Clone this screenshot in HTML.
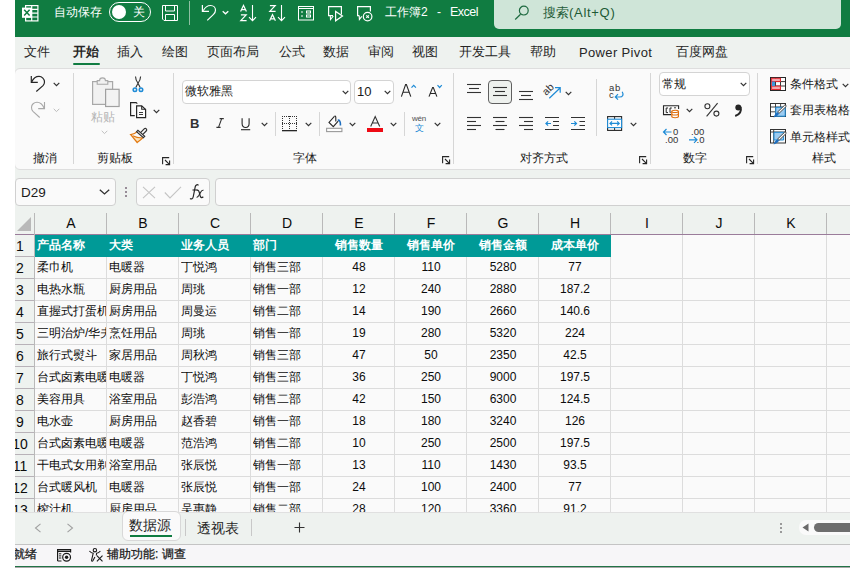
<!DOCTYPE html>
<html><head><meta charset="utf-8">
<style>
*{box-sizing:border-box;margin:0;padding:0}
html,body{width:850px;height:568px;overflow:hidden;background:#fff}
body{position:relative;font-family:"Liberation Sans",sans-serif;color:#262626}
.a{position:absolute}
.t{position:absolute;white-space:nowrap;line-height:1}
svg{position:absolute;overflow:visible}
#win{position:absolute;left:15px;top:0;width:835px;height:568px;background:#eef2ef;overflow:hidden}
#title{position:absolute;left:0;top:0;width:835px;height:37px;background:#107c41}
.wt{color:#fff}
#search{position:absolute;left:479px;top:-4px;width:347px;height:33px;background:#cfe5d8;border-radius:5px}
.menu{font-size:13px;color:#262626}
#ribbon{position:absolute;left:14px;top:68px;width:850px;height:102px;background:#fafafa;border:1px solid #dedede;border-radius:6px}
.sep{position:absolute;width:1px;background:#d6d6d6}
.gl{font-size:12px;color:#1a1a1a}
</style></head><body>
<div id="win">
  <div id="title">
    <!-- excel icon -->
    <svg style="left:7px;top:5px" width="17" height="17" viewBox="0 0 17 17">
      <rect x="3.6" y="0.6" width="12.3" height="15.3" fill="none" stroke="#fff" stroke-width="1.2"/>
      <path d="M9.7 0.6 V15.9 M3.6 4.4 H15.9 M3.6 8.2 H15.9 M3.6 12 H15.9" stroke="#fff" stroke-width="1.2"/>
      <rect x="0" y="2.6" width="10" height="10.2" fill="#fff"/>
      <path d="M2.2 4.8 L7.6 10.6 M7.6 4.8 L2.2 10.6" stroke="#107c41" stroke-width="1.5"/>
    </svg>
    <div class="t wt" style="left:39px;top:6px;font-size:12px">自动保存</div>
    <div class="a" style="left:94px;top:2px;width:42px;height:20px;border:1px solid #fff;border-radius:10px"></div>
    <div class="a" style="left:97px;top:5px;width:14px;height:14px;background:#fff;border-radius:50%"></div>
    <div class="t wt" style="left:118px;top:6px;font-size:12px">关</div>
    <svg style="left:147px;top:5px" width="16" height="16" viewBox="0 0 16 16">
      <path d="M0.5 0.5 H15.5 V15.5 H2 L0.5 14 Z" fill="none" stroke="#fff"/>
      <path d="M3.5 0.5 V6 H12.5 V0.5" fill="none" stroke="#fff"/>
      <path d="M3.5 15.5 V9.5 H12.5 V15.5" fill="none" stroke="#fff"/>
    </svg>
    <div class="a" style="left:174px;top:1px;width:1px;height:24px;background:#8fbfa2"></div>
    <!-- undo -->
    <svg style="left:186px;top:4px" width="16" height="18" viewBox="0 0 16 18">
      <path d="M1.4 1 V7.4 H8" fill="none" stroke="#fff" stroke-width="1.2"/>
      <path d="M2.2 6.8 C4 3.2 6.5 1.5 9.6 1.5 C12.6 1.5 14.5 3.8 14.5 6.2 C14.5 7.8 13.8 9 12.5 10.3 L6.3 16.4" fill="none" stroke="#fff" stroke-width="1.2"/>
    </svg>
    <svg style="left:207px;top:10px" width="7" height="5" viewBox="0 0 7 5"><path d="M0.7 1.2 L3.5 3.8 L6.3 1.2" fill="none" stroke="#fff" stroke-width="1.3"/></svg>
    <!-- sort az -->
    <svg style="left:225px;top:5px" width="18" height="17" viewBox="0 0 18 17"><path d="M0.6 6.6 L3.5 0.5 L6.4 6.6 M1.6 4.6 H5.4 M0.9 9.8 H6.2 L0.8 15.6 H6.6" fill="none" stroke="#fff" stroke-width="1.2"/><path d="M12.5 0 V15.6 M9 12.1 L12.5 15.6 L16 12.1" fill="none" stroke="#fff" stroke-width="1.1"/></svg>
    <svg style="left:254px;top:5px" width="18" height="17" viewBox="0 0 18 17"><path d="M0.9 0.6 H6.2 L0.8 6.4 H6.6 M0.6 15.8 L3.5 9.7 L6.4 15.8 M1.6 13.8 H5.4" fill="none" stroke="#fff" stroke-width="1.2"/><path d="M12.5 0 V15.6 M9 12.1 L12.5 15.6 L16 12.1" fill="none" stroke="#fff" stroke-width="1.1"/></svg>
    <!-- form -->
    <svg style="left:283px;top:6px" width="16" height="15" viewBox="0 0 16 15">
      <rect x="0.5" y="0.5" width="15" height="13.5" fill="none" stroke="#fff"/>
      <line x1="0.5" y1="2.5" x2="15.5" y2="2.5" stroke="#fff"/>
      <path d="M3 6 H5 M3 10 H5" stroke="#fff"/>
      <rect x="8.5" y="5" width="4" height="2" fill="none" stroke="#fff"/>
      <rect x="8.5" y="9" width="4" height="2" fill="none" stroke="#fff"/>
    </svg>
    <!-- slideshow -->
    <svg style="left:313px;top:6px" width="16" height="16" viewBox="0 0 16 16">
      <path d="M5 9.6 H0.6 V0.6 H13.4 V8.6" fill="none" stroke="#fff" stroke-width="1.2"/>
      <path d="M2.3 9.6 L2.5 13.5 L5.3 10" fill="none" stroke="#fff" stroke-width="1.1"/>
      <path d="M7.6 5.4 V14.8 L14.5 10.1 Z" fill="none" stroke="#fff" stroke-width="1.2"/>
    </svg>
    <!-- third -->
    <svg style="left:342px;top:6px" width="16" height="16" viewBox="0 0 16 16">
      <path d="M2.2 9.6 H0.6 V0.6 H13.4 V5.6" fill="none" stroke="#fff" stroke-width="1.2"/>
      <path d="M2.2 9.6 L2.4 13.5 L4.8 10.4" fill="none" stroke="#fff" stroke-width="1.1"/>
      <circle cx="10.6" cy="10.6" r="4.3" fill="#107c41" stroke="#fff" stroke-width="1.2"/>
      <path d="M9.3 9.3 L11.9 11.9 M11.9 9.3 L9.3 11.9" stroke="#fff" stroke-width="1.1"/>
    </svg>
    <div class="t wt" style="left:370px;top:6px;font-size:12px">工作簿2</div><div class="t wt" style="left:422px;top:6px;font-size:12px">-</div><div class="t wt" style="left:435px;top:6px;font-size:12.5px;letter-spacing:-0.5px">Excel</div>
  </div>
  <div id="search">
    <svg style="left:20px;top:10px" width="15" height="15" viewBox="0 0 15 15"><circle cx="9.8" cy="4.6" r="4.4" fill="none" stroke="#1e6a40" stroke-width="1.2"/><path d="M6.6 8.2 L1.2 13.5" stroke="#1e6a40" stroke-width="1.2"/></svg>
    <div class="t" style="left:49px;top:10px;font-size:13px;color:#1d5a36">搜索<span style="letter-spacing:0.7px">(Alt+Q)</span></div>
  </div>

  <div class="t menu" style="left:9px;top:45px">文件</div>
  <div class="t menu" style="left:58px;top:45px;font-weight:bold">开始</div>
  <div class="a" style="left:58px;top:63px;width:27px;height:2px;background:#107c41;border-radius:1px"></div>
  <div class="t menu" style="left:102px;top:45px">插入</div>
  <div class="t menu" style="left:147px;top:45px">绘图</div>
  <div class="t menu" style="left:192px;top:45px">页面布局</div>
  <div class="t menu" style="left:264px;top:45px">公式</div>
  <div class="t menu" style="left:308px;top:45px">数据</div>
  <div class="t menu" style="left:353px;top:45px">审阅</div>
  <div class="t menu" style="left:397px;top:45px">视图</div>
  <div class="t menu" style="left:444px;top:45px">开发工具</div>
  <div class="t menu" style="left:515px;top:45px">帮助</div>
  <div class="t menu" style="left:564px;top:46px;letter-spacing:0.35px">Power Pivot</div>
  <div class="t menu" style="left:661px;top:45px">百度网盘</div>
<div id="pg" class="a" style="left:-15px;top:0;width:850px;height:568px">
  <div id="ribbon"></div>
  <!-- undo group -->
  <svg style="left:30px;top:75px" width="16" height="18" viewBox="0 0 16 18">
    <path d="M1.3 1 V7.4 H7.8" fill="none" stroke="#262626" stroke-width="1.2"/>
    <path d="M1.7 7 C3.5 3 6 1.4 9 1.4 C12 1.4 14.5 4 14.5 7 C14.5 8.5 14 9.5 13 10.7 L6.3 16.5" fill="none" stroke="#262626" stroke-width="1.2"/>
  </svg>
  <svg style="left:53px;top:82px" width="7" height="5" viewBox="0 0 7 5"><path d="M0.7 0.8 L3.5 3.6 L6.3 0.8" fill="none" stroke="#323232" stroke-width="1.2"/></svg>
  <svg style="left:30px;top:97px" width="16" height="22" viewBox="0 0 16 22">
    <path d="M14.5 5 V11.6 H8.2" fill="none" stroke="#a8a8a8" stroke-width="1.1"/>
    <path d="M14.2 11.3 C12.5 7.3 10 5.3 7 5.3 C4 5.3 1.5 7.5 1.5 10.5 C1.5 12 2 13.3 3 14.3 L9.7 20.5" fill="none" stroke="#a8a8a8" stroke-width="1.1"/>
  </svg>
  <svg style="left:53px;top:108px" width="7" height="5" viewBox="0 0 7 5"><path d="M0.7 0.8 L3.5 3.6 L6.3 0.8" fill="none" stroke="#bcbcbc" stroke-width="1"/></svg>
  <div class="t gl" style="left:33px;top:151.6px">撤消</div>
  <div class="sep" style="left:73px;top:73px;height:91px"></div>
  <!-- clipboard -->
  <svg style="left:91px;top:76px" width="30" height="32" viewBox="0 0 30 32">
    <rect x="1.6" y="5.6" width="20" height="22.8" fill="#f1f1f1" stroke="#a8a8a8" stroke-width="1.2"/>
    <path d="M6.2 4.6 H8.6 C8.6 1 14.4 1 14.4 4.6 H16.8 V8.2 H6.2 Z" fill="#f1f1f1" stroke="#a8a8a8" stroke-width="1.1"/>
    <rect x="14.6" y="13.3" width="13.5" height="17.2" fill="#f3f3f3" stroke="#a0a0a0" stroke-width="1.2"/>
  </svg>
  <div class="t gl" style="left:91px;top:111px;color:#b4b4b4">粘贴</div>
  <svg style="left:101px;top:130px" width="7" height="5" viewBox="0 0 7 5"><path d="M0.7 0.8 L3.5 3.6 L6.3 0.8" fill="none" stroke="#c0c0c0" stroke-width="1"/></svg>
  <svg style="left:132px;top:76px" width="12" height="16" viewBox="0 0 12 16">
    <path d="M3.5 0.5 C3.5 3 4.5 5 6 7.2 L8.2 11.6 M8.6 0.5 C8.6 3 7.6 5 6 7.2 L3.8 11.6" fill="none" stroke="#323232" stroke-width="1.1"/>
    <circle cx="2.9" cy="13.8" r="1.75" fill="#e8f0f8" stroke="#1e8bd6" stroke-width="1.5"/>
    <circle cx="9" cy="13.8" r="1.75" fill="#e8f0f8" stroke="#1e8bd6" stroke-width="1.5"/>
  </svg>
  <svg style="left:130px;top:102px" width="17" height="17" viewBox="0 0 17 17">
    <path d="M4.8 13.6 H0.6 V0.6 H6.2 L7.3 1.6" fill="none" stroke="#262626" stroke-width="1.2"/>
    <path d="M6.6 15.6 V3.9 H11.7 L15.6 7.6 V15.6 Z" fill="#fdfdfd" stroke="#262626" stroke-width="1.2"/>
    <path d="M11.7 3.9 V7.3 H15.6" fill="none" stroke="#262626" stroke-width="1.1"/>
    <path d="M9 10.5 H13 M9 12.5 H13" stroke="#262626" stroke-width="0.9"/>
  </svg>
  <svg style="left:153px;top:109px" width="7" height="5" viewBox="0 0 7 5"><path d="M0.7 0.8 L3.5 3.6 L6.3 0.8" fill="none" stroke="#323232" stroke-width="1.2"/></svg>
  <svg style="left:130px;top:124px" width="18" height="20" viewBox="0 0 18 20">
    <path d="M3.5 12.6 C6.5 14 9.5 14.6 12.4 14.2 L7.3 18.4 Z" fill="#fde3b8"/>
    <path d="M7.4 7.4 C5.5 9.4 3 10.4 0.7 10.6 L7.2 18.5 C9 17.1 11 15.6 13 13.6" fill="none" stroke="#e27a12" stroke-width="1.3"/>
    <path d="M2.6 11.8 C5.5 13.4 8.5 14 12.2 14" fill="none" stroke="#e27a12" stroke-width="1.1"/>
    <path d="M10.8 8.4 L14.2 4.9 C14.8 4.3 15.8 4.3 16.3 4.9 C16.8 5.4 16.8 6.4 16.2 7 L12.8 10.4" fill="#fdfdfd" stroke="#323232" stroke-width="1.2"/>
    <path d="M6.6 7.7 L7.9 6.4 L14.7 12.3 L13.4 13.6 Z" fill="#fdfdfd" stroke="#323232" stroke-width="1.15"/>
  </svg>
  <div class="t gl" style="left:97px;top:151.6px">剪贴板</div>
  <svg style="left:162px;top:157px" width="9" height="9" viewBox="0 0 9 9"><path d="M0.6 7.2 V0.6 H7.2" fill="none" stroke="#262626" stroke-width="1.1"/><path d="M3 3 L7.6 7.6 M3.6 7.6 H7.6 V3.6" fill="none" stroke="#262626" stroke-width="1.1"/></svg>
  <div class="sep" style="left:173px;top:73px;height:91px"></div>

  <!-- font group -->
  <div class="a" style="left:182px;top:80px;width:169px;height:24px;background:#fff;border:1px solid #d4d4d4;border-radius:4px"></div>
  <div class="t gl" style="left:185px;top:85px">微软雅黑</div>
  <svg style="left:342px;top:90px" width="7" height="5" viewBox="0 0 7 5"><path d="M0.7 0.8 L3.5 3.6 L6.3 0.8" fill="none" stroke="#323232" stroke-width="1.2"/></svg>
  <div class="a" style="left:354px;top:80px;width:40px;height:24px;background:#fff;border:1px solid #d4d4d4;border-radius:4px"></div>
  <div class="t gl" style="left:357px;top:85px;font-size:13px">10</div>
  <svg style="left:384px;top:90px" width="7" height="5" viewBox="0 0 7 5"><path d="M0.7 0.8 L3.5 3.6 L6.3 0.8" fill="none" stroke="#323232" stroke-width="1.2"/></svg>
  <svg style="left:400px;top:84px" width="12" height="13" viewBox="0 0 12 13"><path d="M1.4 12.6 L5.6 0.6 H6.4 L10.8 12.6 M3 8.3 H9.2" fill="none" stroke="#262626" stroke-width="1.1"/></svg>
  <svg style="left:411px;top:84px" width="6" height="5" viewBox="0 0 6 5"><path d="M0.5 3.6 L2.7 1.3 L4.9 3.6" fill="none" stroke="#1e8bd6" stroke-width="1.2"/></svg>
  <svg style="left:428px;top:87px" width="10" height="10" viewBox="0 0 10 10"><path d="M1 9.6 L4.6 0.6 H5.3 L8.9 9.6 M2.3 6.5 H7.6" fill="none" stroke="#262626" stroke-width="1.1"/></svg>
  <svg style="left:437px;top:84px" width="6" height="5" viewBox="0 0 6 5"><path d="M0.5 1.2 L2.6 3.5 L4.8 1.2" fill="none" stroke="#1e8bd6" stroke-width="1.2"/></svg>
  <div class="t" style="left:190px;top:117px;font-size:13px;font-weight:bold;color:#323232">B</div>
  <svg style="left:216px;top:118px" width="9" height="10" viewBox="0 0 9 10"><path d="M3.6 0.6 H7.8 M0.4 9.4 H4.6 M5.7 0.6 L2.5 9.4" fill="none" stroke="#323232" stroke-width="1.1"/></svg>
  <svg style="left:241px;top:118px" width="10" height="13" viewBox="0 0 10 13"><path d="M1.1 0.3 V5.6 C1.1 8.2 2.6 9.5 4.6 9.5 C6.6 9.5 8.1 8.2 8.1 5.6 V0.3" fill="none" stroke="#262626" stroke-width="1.1"/><path d="M0 11.7 H9.2" stroke="#262626" stroke-width="1.1"/></svg>
  <svg style="left:261px;top:122px" width="7" height="5" viewBox="0 0 7 5"><path d="M0.7 0.8 L3.5 3.6 L6.3 0.8" fill="none" stroke="#323232" stroke-width="1.2"/></svg>
  <div class="sep" style="left:275px;top:112px;height:24px"></div>
  <svg style="left:282px;top:116px" width="16" height="16" viewBox="0 0 16 16"><g fill="#323232"><rect x="0" y="0" width="1" height="1"/><rect x="0" y="2" width="1" height="1"/><rect x="0" y="4" width="1" height="1"/><rect x="0" y="6" width="1" height="1"/><rect x="0" y="8" width="1" height="1"/><rect x="0" y="10" width="1" height="1"/><rect x="0" y="12" width="1" height="1"/><rect x="7" y="0" width="1" height="1"/><rect x="7" y="2" width="1" height="1"/><rect x="7" y="4" width="1" height="1"/><rect x="7" y="6" width="1" height="1"/><rect x="7" y="8" width="1" height="1"/><rect x="7" y="10" width="1" height="1"/><rect x="7" y="12" width="1" height="1"/><rect x="14" y="0" width="1" height="1"/><rect x="14" y="2" width="1" height="1"/><rect x="14" y="4" width="1" height="1"/><rect x="14" y="6" width="1" height="1"/><rect x="14" y="8" width="1" height="1"/><rect x="14" y="10" width="1" height="1"/><rect x="14" y="12" width="1" height="1"/><rect x="0" y="0" width="1" height="1"/><rect x="2" y="0" width="1" height="1"/><rect x="4" y="0" width="1" height="1"/><rect x="6" y="0" width="1" height="1"/><rect x="8" y="0" width="1" height="1"/><rect x="10" y="0" width="1" height="1"/><rect x="12" y="0" width="1" height="1"/><rect x="14" y="0" width="1" height="1"/><rect x="0" y="7" width="1" height="1"/><rect x="2" y="7" width="1" height="1"/><rect x="4" y="7" width="1" height="1"/><rect x="6" y="7" width="1" height="1"/><rect x="8" y="7" width="1" height="1"/><rect x="10" y="7" width="1" height="1"/><rect x="12" y="7" width="1" height="1"/><rect x="14" y="7" width="1" height="1"/></g><rect x="0" y="14" width="15" height="1.3" fill="#262626"/></svg>
  <svg style="left:305px;top:122px" width="7" height="5" viewBox="0 0 7 5"><path d="M0.7 0.8 L3.5 3.6 L6.3 0.8" fill="none" stroke="#323232" stroke-width="1.2"/></svg>
  <div class="sep" style="left:319px;top:112px;height:24px"></div>
  <svg style="left:326px;top:115px" width="17" height="18" viewBox="0 0 17 18">
    <path d="M8.4 1.4 L3 7.4 L7.3 11.7 L12.2 6.2" fill="#fdfdfd" stroke="#262626" stroke-width="1.1"/>
    <path d="M8.4 1.4 C9.2 0.7 9.8 1.4 9.8 2.4 V6.4" fill="none" stroke="#262626" stroke-width="1.1"/>
    <path d="M11.8 5.2 C13.6 4.9 14.4 6.6 14.4 8.8 V10.6" fill="none" stroke="#1e6fc0" stroke-width="1.6"/>
    <rect x="0.6" y="13.3" width="15.3" height="3.3" fill="#fdfdfd" stroke="#9a9a9a" stroke-width="1.1"/>
  </svg>
  <svg style="left:349px;top:122px" width="7" height="5" viewBox="0 0 7 5"><path d="M0.7 0.8 L3.5 3.6 L6.3 0.8" fill="none" stroke="#323232" stroke-width="1.2"/></svg>
  <svg style="left:370px;top:116px" width="11" height="11" viewBox="0 0 11 11"><path d="M0.7 10.6 L5.2 0.6 L9.7 10.6 M2.3 7 H8.1" fill="none" stroke="#323232" stroke-width="1.1"/></svg>
  <div class="a" style="left:367px;top:128px;width:16px;height:4px;background:#ee0a14"></div>
  <svg style="left:390px;top:122px" width="7" height="5" viewBox="0 0 7 5"><path d="M0.7 0.8 L3.5 3.6 L6.3 0.8" fill="none" stroke="#323232" stroke-width="1.2"/></svg>
  <div class="sep" style="left:404px;top:112px;height:24px"></div>
  <div class="t" style="left:412px;top:115px;font-size:8px;color:#505050;letter-spacing:-0.3px">wén</div>
  <div class="t" style="left:414.5px;top:123.5px;font-size:9px;color:#1e8bd6">文</div>
  <svg style="left:434px;top:122px" width="7" height="5" viewBox="0 0 7 5"><path d="M0.7 0.8 L3.5 3.6 L6.3 0.8" fill="none" stroke="#323232" stroke-width="1.2"/></svg>
  <div class="t gl" style="left:293px;top:151.6px">字体</div>
  <svg style="left:442px;top:156px" width="9" height="9" viewBox="0 0 9 9"><path d="M0.6 7.2 V0.6 H7.2" fill="none" stroke="#262626" stroke-width="1.1"/><path d="M3 3 L7.6 7.6 M3.6 7.6 H7.6 V3.6" fill="none" stroke="#262626" stroke-width="1.1"/></svg>
  <div class="sep" style="left:453px;top:73px;height:91px"></div>

  <!-- alignment group -->
  <svg style="left:467px;top:84px" width="20" height="20" viewBox="0 0 20 20"><path d="M0 0.5 H14" stroke="#323232" stroke-width="1.1"/><path d="M2 4.5 H12" stroke="#323232" stroke-width="1.1"/><path d="M0 8.5 H14" stroke="#323232" stroke-width="1.1"/></svg>
  <div class="a" style="left:488px;top:80px;width:24px;height:24px;background:#eef1ee;border:1px solid #5f5f5f;border-radius:4px"></div>
  <svg style="left:493px;top:87px" width="20" height="20" viewBox="0 0 20 20"><path d="M0 0.5 H14" stroke="#323232" stroke-width="1.1"/><path d="M2 4.5 H12" stroke="#323232" stroke-width="1.1"/><path d="M0 8.5 H14" stroke="#323232" stroke-width="1.1"/></svg>
  <svg style="left:519px;top:91px" width="20" height="20" viewBox="0 0 20 20"><path d="M0 0.5 H14" stroke="#323232" stroke-width="1.1"/><path d="M2 4.5 H12" stroke="#323232" stroke-width="1.1"/><path d="M0 8.5 H14" stroke="#323232" stroke-width="1.1"/></svg>
  <svg style="left:543px;top:83px" width="19" height="17" viewBox="0 0 19 17">
    <text x="0" y="0" font-size="10.5" fill="#323232" font-family="Liberation Sans" transform="translate(3.3,13) rotate(-45)">ab</text>
    <path d="M6.3 15.2 L16.8 5.2 M12 4.6 H17.2 V9.8" fill="none" stroke="#1e8bd6" stroke-width="1.2"/>
  </svg>
  <svg style="left:565px;top:91px" width="7" height="5" viewBox="0 0 7 5"><path d="M0.7 0.8 L3.5 3.6 L6.3 0.8" fill="none" stroke="#323232" stroke-width="1.2"/></svg>
  <svg style="left:467px;top:117px" width="20" height="20" viewBox="0 0 20 20"><path d="M0 0.5 H14" stroke="#323232" stroke-width="1.1"/><path d="M0 4.5 H9" stroke="#323232" stroke-width="1.1"/><path d="M0 8.5 H14" stroke="#323232" stroke-width="1.1"/><path d="M0 12.5 H9" stroke="#323232" stroke-width="1.1"/></svg>
  <svg style="left:493px;top:117px" width="20" height="20" viewBox="0 0 20 20"><path d="M0 0.5 H14" stroke="#323232" stroke-width="1.1"/><path d="M2.5 4.5 H11.5" stroke="#323232" stroke-width="1.1"/><path d="M0 8.5 H14" stroke="#323232" stroke-width="1.1"/><path d="M2.5 12.5 H11.5" stroke="#323232" stroke-width="1.1"/></svg>
  <svg style="left:519px;top:117px" width="20" height="20" viewBox="0 0 20 20"><path d="M0 0.5 H14" stroke="#323232" stroke-width="1.1"/><path d="M5 4.5 H14" stroke="#323232" stroke-width="1.1"/><path d="M0 8.5 H14" stroke="#323232" stroke-width="1.1"/><path d="M5 12.5 H14" stroke="#323232" stroke-width="1.1"/></svg>
  <svg style="left:545px;top:117px" width="20" height="20" viewBox="0 0 20 20"><path d="M0 0.5 H14 M8 4.5 H14 M8 8.5 H14 M0 12.5 H14" stroke="#323232" stroke-width="1.1"/></svg>
  <svg style="left:545px;top:117px" width="8" height="12" viewBox="0 0 8 12"><path d="M6 6.5 H0.9 M3.1 4.3 L0.9 6.5 L3.1 8.7" fill="none" stroke="#1e8bd6" stroke-width="1.2"/></svg>
  <svg style="left:571px;top:117px" width="20" height="20" viewBox="0 0 20 20"><path d="M0 0.5 H14 M8.5 4.5 H14 M8.5 8.5 H14 M0 12.5 H14" stroke="#323232" stroke-width="1.1"/></svg>
  <svg style="left:571px;top:117px" width="8" height="12" viewBox="0 0 8 12"><path d="M0 6.5 H5.5 M3.3 4.3 L5.5 6.5 L3.3 8.7" fill="none" stroke="#1e8bd6" stroke-width="1.2"/></svg>
  <div class="sep" style="left:596px;top:79px;height:57px"></div>
  <div class="t" style="left:609px;top:84px;font-size:9.5px;color:#323232;line-height:7.3px;letter-spacing:0.6px">ab<br>c</div>
  <svg style="left:614px;top:91px" width="10" height="9" viewBox="0 0 10 9"><path d="M8.2 0.8 C9.8 3.5 9 6 5.5 6 H1.5 M4 3.2 L1.3 6 L4 8.6" fill="none" stroke="#1e8bd6" stroke-width="1.2"/></svg>
  <svg style="left:607px;top:116px" width="16" height="16" viewBox="0 0 16 16">
    <rect x="0.6" y="0.6" width="14" height="13.8" fill="#fdfdfd" stroke="#262626" stroke-width="1.1"/>
    <path d="M7.6 0.6 V3 M7.6 11.6 V14.4" stroke="#262626" stroke-width="1"/>
    <rect x="0.6" y="3.2" width="14" height="8.4" fill="#fdfdfd" stroke="#1e8bd6" stroke-width="1.1"/>
    <path d="M3 7.4 H12.2 M5 5.4 L3 7.4 L5 9.4 M10.2 5.4 L12.2 7.4 L10.2 9.4" fill="none" stroke="#1e8bd6" stroke-width="1.2"/>
  </svg>
  <svg style="left:630px;top:122px" width="7" height="5" viewBox="0 0 7 5"><path d="M0.7 0.8 L3.5 3.6 L6.3 0.8" fill="none" stroke="#323232" stroke-width="1.2"/></svg>
  <div class="t gl" style="left:520px;top:151.6px">对齐方式</div>
  <svg style="left:639px;top:156px" width="9" height="9" viewBox="0 0 9 9"><path d="M0.6 7.2 V0.6 H7.2" fill="none" stroke="#262626" stroke-width="1.1"/><path d="M3 3 L7.6 7.6 M3.6 7.6 H7.6 V3.6" fill="none" stroke="#262626" stroke-width="1.1"/></svg>
  <div class="sep" style="left:650px;top:73px;height:91px"></div>
  <!-- number group -->
  <div class="a" style="left:659px;top:72px;width:91px;height:24px;background:#fff;border:1px solid #d4d4d4;border-radius:4px"></div>
  <div class="t gl" style="left:662px;top:78px">常规</div>
  <svg style="left:740px;top:82px" width="7" height="5" viewBox="0 0 7 5"><path d="M0.7 0.8 L3.5 3.6 L6.3 0.8" fill="none" stroke="#323232" stroke-width="1.2"/></svg>
  <svg style="left:662px;top:104px" width="19" height="15" viewBox="0 0 19 15">
    <path d="M9 10.6 H1.5 V1.7 H16.6 V5" fill="none" stroke="#262626" stroke-width="1.1"/>
    <path d="M6 4 H4.2 V8.6 H6 M9.8 4 H8 V8.6 H8.5" fill="none" stroke="#262626" stroke-width="1"/>
    <path d="M12 3.8 H14" stroke="#262626" stroke-width="0.9"/>
    <path d="M9.8 7.3 C9.8 5.9 16.4 5.9 16.4 7.3 V12.6 C16.4 14.1 9.8 14.1 9.8 12.6 Z" fill="#fdfdfd" stroke="#e07010" stroke-width="1.2"/>
    <path d="M9.8 7.4 C9.8 8.8 16.4 8.8 16.4 7.4 M9.8 10 C9.8 11.4 16.4 11.4 16.4 10" fill="none" stroke="#e07010" stroke-width="1.1"/>
  </svg>
  <svg style="left:686px;top:108px" width="7" height="5" viewBox="0 0 7 5"><path d="M0.7 0.8 L3.5 3.6 L6.3 0.8" fill="none" stroke="#323232" stroke-width="1.2"/></svg>
  <svg style="left:704px;top:102px" width="16" height="16" viewBox="0 0 16 16"><circle cx="3.4" cy="4.2" r="2.5" fill="none" stroke="#323232" stroke-width="1.1"/><circle cx="12.4" cy="11.6" r="2.5" fill="none" stroke="#323232" stroke-width="1.1"/><path d="M13.6 1.2 L2.6 14.4" stroke="#323232" stroke-width="1.1"/></svg>
  <svg style="left:734px;top:104px" width="9" height="13" viewBox="0 0 9 13"><circle cx="4.3" cy="3.4" r="3" fill="#262626"/><path d="M6.6 3 C7.6 7 5.5 10.5 1.2 12" fill="none" stroke="#262626" stroke-width="2"/></svg>
  <svg style="left:662px;top:127px" width="18" height="17" viewBox="0 0 18 17">
    <path d="M9.5 5 H1.5 M4.5 2 L1.5 5 L4.5 8" fill="none" stroke="#1e8bd6" stroke-width="1.2"/>
    <text x="11" y="7.8" font-size="9.5" fill="#323232" font-family="Liberation Sans">0</text>
    <text x="3" y="15.6" font-size="9.5" fill="#323232" font-family="Liberation Sans">.00</text>
  </svg>
  <svg style="left:688px;top:127px" width="18" height="17" viewBox="0 0 18 17">
    <text x="3" y="7.8" font-size="9.5" fill="#323232" font-family="Liberation Sans">.00</text>
    <path d="M1 12.8 H9 M6 9.8 L9 12.8 L6 15.8" fill="none" stroke="#1e8bd6" stroke-width="1.2"/>
    <text x="8.5" y="15.6" font-size="9.5" fill="#323232" font-family="Liberation Sans">.0</text>
  </svg>
  <div class="t gl" style="left:683px;top:151.6px">数字</div>
  <svg style="left:746px;top:156px" width="9" height="9" viewBox="0 0 9 9"><path d="M0.6 7.2 V0.6 H7.2" fill="none" stroke="#262626" stroke-width="1.1"/><path d="M3 3 L7.6 7.6 M3.6 7.6 H7.6 V3.6" fill="none" stroke="#262626" stroke-width="1.1"/></svg>
  <div class="sep" style="left:757px;top:73px;height:91px"></div>
  <!-- styles group -->
  <svg style="left:770px;top:77px" width="16" height="14" viewBox="0 0 16 14">
    <rect x="0.5" y="0.5" width="15" height="13" fill="#fdfdfd" stroke="#262626" stroke-width="1"/>
    <path d="M5.5 0.5 V13.5 M10.5 0.5 V13.5 M0.5 4.6 H15.5 M0.5 9 H15.5" stroke="#262626" stroke-width="0.9"/>
    <rect x="1.6" y="1.3" width="8.8" height="3.2" fill="#f3a7ad" stroke="#e3262f" stroke-width="1"/>
    <rect x="1.6" y="9.1" width="8.8" height="3.4" fill="#f3a7ad" stroke="#e3262f" stroke-width="1"/>
    <rect x="1.6" y="4.5" width="3.4" height="4.6" fill="#3d95dd"/>
    <path d="M1.4 4.5 V9.1" stroke="#e3262f" stroke-width="0.9"/>
  </svg>
  <div class="t gl" style="left:790px;top:78px">条件格式</div>
  <svg style="left:842px;top:83px" width="7" height="5" viewBox="0 0 7 5"><path d="M0.7 0.8 L3.5 3.6 L6.3 0.8" fill="none" stroke="#323232" stroke-width="1.2"/></svg>
  <svg style="left:770px;top:103px" width="17" height="15" viewBox="0 0 17 15">
    <rect x="0.5" y="0.5" width="15" height="13" fill="#fdfdfd" stroke="#323232" stroke-width="1"/>
    <path d="M0.5 4 H15.5 M0.5 8.8 H5.5 M5.5 0.5 V13.5 M10.6 0.5 V4" stroke="#323232" stroke-width="0.9"/>
    <path d="M5.8 4.3 H15.2 V13.2 H5.8 Z" fill="#9ccbf0" stroke="#1e8bd6" stroke-width="1"/>
    <path d="M16.2 3.4 L9 10.4 L7.6 9 L14.8 2 C15.3 1.6 16.6 2.9 16.2 3.4 Z" fill="#fdfdfd" stroke="#323232" stroke-width="0.9"/>
    <path d="M7.6 9.2 L9 10.6 C8 12.6 6.2 14 3.6 14.4 C4.3 12 5.6 10 7.6 9.2 Z" fill="#1e6fc0"/>
  </svg>
  <div class="t gl" style="left:790px;top:104px">套用表格格式</div>
  <svg style="left:770px;top:129px" width="17" height="15" viewBox="0 0 17 15">
    <rect x="0.5" y="0.5" width="15" height="13.5" fill="#fdfdfd" stroke="#323232" stroke-width="1"/>
    <path d="M0.5 3 H15.5 M3.7 0.5 V14" stroke="#323232" stroke-width="0.9"/>
    <path d="M4 3.3 H13.6 V11 H4 Z" fill="#9ccbf0" stroke="#1e8bd6" stroke-width="1"/>
    <path d="M16.2 4.4 L9 11.4 L7.6 10 L14.8 3 C15.3 2.6 16.6 3.9 16.2 4.4 Z" fill="#fdfdfd" stroke="#323232" stroke-width="0.9"/>
    <path d="M7.6 10.2 L9 11.6 C8 13.6 6.2 15 3.6 15.4 C4.3 13 5.6 11 7.6 10.2 Z" fill="#1e6fc0"/>
  </svg>
  <div class="t gl" style="left:790px;top:131px">单元格样式</div>
  <div class="t gl" style="left:812px;top:151.6px">样式</div>
  <!--GRID_START-->
  <!-- formula bar -->
  <div class="a" style="left:15px;top:178px;width:101px;height:28px;background:#fafafa;border:1px solid #d0d0d0;border-radius:4px"></div>
  <div class="t" style="left:21px;top:186px;font-size:13.5px;color:#1a1a1a">D29</div>
  <svg style="left:99px;top:189px" width="11" height="6" viewBox="0 0 11 6"><path d="M0.8 0.8 L5.5 5 L10.2 0.8" fill="none" stroke="#323232" stroke-width="1.3"/></svg>
  <div class="a" style="left:125px;top:187px;width:2px;height:2px;background:#7a6a7a;border-radius:1px"></div>
  <div class="a" style="left:125px;top:191px;width:2px;height:2px;background:#7a6a7a;border-radius:1px"></div>
  <div class="a" style="left:125px;top:195px;width:2px;height:2px;background:#7a6a7a;border-radius:1px"></div>
  <div class="a" style="left:136px;top:178px;width:74px;height:28px;background:#fafafa;border:1px solid #d0d0d0;border-radius:4px"></div>
  <svg style="left:142px;top:186px" width="14" height="13" viewBox="0 0 14 13"><path d="M1 0.8 L13 12.2 M13 0.8 L1 12.2" stroke="#c4c4c4" stroke-width="1.1"/></svg>
  <svg style="left:164px;top:186px" width="18" height="13" viewBox="0 0 18 13"><path d="M0.8 6.5 L6 12 L17 0.8" fill="none" stroke="#c4c4c4" stroke-width="1.1"/></svg>
  <svg style="left:189px;top:184px" width="16" height="16" viewBox="0 0 16 16"><path d="M9.5 1.3 C8.5 0.3 6.8 0.6 6.3 2.5 L4.3 12.5 C3.8 14.8 2.5 15.5 1 14.5" fill="none" stroke="#262626" stroke-width="1.2"/><path d="M3.5 6 H8.3" stroke="#262626" stroke-width="1.1"/><path d="M7.8 6.4 C9.3 5.8 9.8 6.8 10.3 8.5 L11.3 12.3 C11.8 13.8 13 14 14.3 12.8" fill="none" stroke="#262626" stroke-width="1.2"/><path d="M14.5 6.3 C13.3 6 12.5 6.8 11.8 8 L9.8 11.5 C9 12.8 8.5 13.5 7.6 13.2" fill="none" stroke="#262626" stroke-width="1.1"/></svg>
  <div class="a" style="left:215px;top:178px;width:650px;height:28px;background:#fafafa;border:1px solid #d0d0d0;border-radius:4px"></div>
  <!-- grid -->
  <div class="a" style="left:6px;top:213px;width:860px;height:300px;background:#fafafa"></div>
  <div class="a" style="left:6px;top:213px;width:860px;height:21px;background:#eef2ef"></div>
  <div class="a" style="left:6px;top:234px;width:28px;height:280px;background:#eef2ef"></div>
  <svg style="left:17px;top:217px" width="14" height="14" viewBox="0 0 14 14"><path d="M14 0 V14 H0 Z" fill="#b9b9b9"/></svg>
  <div class="a" style="left:34px;top:213px;width:1px;height:21px;background:#b9b9b9"></div>
  <div class="t" style="left:35px;top:215px;width:72px;text-align:center;font-size:14px;color:#0c0c0c;line-height:16px">A</div>
  <div class="a" style="left:106px;top:213px;width:1px;height:21px;background:#b9b9b9"></div>
  <div class="t" style="left:107px;top:215px;width:72px;text-align:center;font-size:14px;color:#0c0c0c;line-height:16px">B</div>
  <div class="a" style="left:178px;top:213px;width:1px;height:21px;background:#b9b9b9"></div>
  <div class="t" style="left:179px;top:215px;width:72px;text-align:center;font-size:14px;color:#0c0c0c;line-height:16px">C</div>
  <div class="a" style="left:250px;top:213px;width:1px;height:21px;background:#b9b9b9"></div>
  <div class="t" style="left:251px;top:215px;width:72px;text-align:center;font-size:14px;color:#0c0c0c;line-height:16px">D</div>
  <div class="a" style="left:322px;top:213px;width:1px;height:21px;background:#b9b9b9"></div>
  <div class="t" style="left:323px;top:215px;width:72px;text-align:center;font-size:14px;color:#0c0c0c;line-height:16px">E</div>
  <div class="a" style="left:394px;top:213px;width:1px;height:21px;background:#b9b9b9"></div>
  <div class="t" style="left:395px;top:215px;width:72px;text-align:center;font-size:14px;color:#0c0c0c;line-height:16px">F</div>
  <div class="a" style="left:466px;top:213px;width:1px;height:21px;background:#b9b9b9"></div>
  <div class="t" style="left:467px;top:215px;width:72px;text-align:center;font-size:14px;color:#0c0c0c;line-height:16px">G</div>
  <div class="a" style="left:538px;top:213px;width:1px;height:21px;background:#b9b9b9"></div>
  <div class="t" style="left:539px;top:215px;width:72px;text-align:center;font-size:14px;color:#0c0c0c;line-height:16px">H</div>
  <div class="a" style="left:610px;top:213px;width:1px;height:21px;background:#b9b9b9"></div>
  <div class="t" style="left:611px;top:215px;width:72px;text-align:center;font-size:14px;color:#0c0c0c;line-height:16px">I</div>
  <div class="a" style="left:682px;top:213px;width:1px;height:21px;background:#b9b9b9"></div>
  <div class="t" style="left:683px;top:215px;width:72px;text-align:center;font-size:14px;color:#0c0c0c;line-height:16px">J</div>
  <div class="a" style="left:754px;top:213px;width:1px;height:21px;background:#b9b9b9"></div>
  <div class="t" style="left:755px;top:215px;width:72px;text-align:center;font-size:14px;color:#0c0c0c;line-height:16px">K</div>
  <div class="a" style="left:826px;top:213px;width:1px;height:21px;background:#b9b9b9"></div>
  <div class="t" style="left:827px;top:215px;width:72px;text-align:center;font-size:14px;color:#0c0c0c;line-height:16px">L</div>
  <div class="a" style="left:6px;top:234px;width:860px;height:1px;background:#9a7c9a"></div>
  <div class="a" style="left:34px;top:213px;width:1px;height:300px;background:#b9b9b9"></div>
  <div class="a" style="left:6px;top:256px;width:28px;height:1px;background:#b8b2b8"></div>
  <div class="t" style="left:6px;top:238px;width:28px;text-align:center;font-size:14px;color:#0c0c0c;line-height:16px">1</div>
  <div class="a" style="left:6px;top:278px;width:28px;height:1px;background:#b8b2b8"></div>
  <div class="t" style="left:6px;top:260px;width:28px;text-align:center;font-size:14px;color:#0c0c0c;line-height:16px">2</div>
  <div class="a" style="left:6px;top:300px;width:28px;height:1px;background:#b8b2b8"></div>
  <div class="t" style="left:6px;top:282px;width:28px;text-align:center;font-size:14px;color:#0c0c0c;line-height:16px">3</div>
  <div class="a" style="left:6px;top:322px;width:28px;height:1px;background:#b8b2b8"></div>
  <div class="t" style="left:6px;top:304px;width:28px;text-align:center;font-size:14px;color:#0c0c0c;line-height:16px">4</div>
  <div class="a" style="left:6px;top:344px;width:28px;height:1px;background:#b8b2b8"></div>
  <div class="t" style="left:6px;top:326px;width:28px;text-align:center;font-size:14px;color:#0c0c0c;line-height:16px">5</div>
  <div class="a" style="left:6px;top:366px;width:28px;height:1px;background:#b8b2b8"></div>
  <div class="t" style="left:6px;top:348px;width:28px;text-align:center;font-size:14px;color:#0c0c0c;line-height:16px">6</div>
  <div class="a" style="left:6px;top:388px;width:28px;height:1px;background:#b8b2b8"></div>
  <div class="t" style="left:6px;top:370px;width:28px;text-align:center;font-size:14px;color:#0c0c0c;line-height:16px">7</div>
  <div class="a" style="left:6px;top:410px;width:28px;height:1px;background:#b8b2b8"></div>
  <div class="t" style="left:6px;top:392px;width:28px;text-align:center;font-size:14px;color:#0c0c0c;line-height:16px">8</div>
  <div class="a" style="left:6px;top:432px;width:28px;height:1px;background:#b8b2b8"></div>
  <div class="t" style="left:6px;top:414px;width:28px;text-align:center;font-size:14px;color:#0c0c0c;line-height:16px">9</div>
  <div class="a" style="left:6px;top:454px;width:28px;height:1px;background:#b8b2b8"></div>
  <div class="t" style="left:6px;top:436px;width:28px;text-align:center;font-size:14px;color:#0c0c0c;line-height:16px">10</div>
  <div class="a" style="left:6px;top:476px;width:28px;height:1px;background:#b8b2b8"></div>
  <div class="t" style="left:6px;top:458px;width:28px;text-align:center;font-size:14px;color:#0c0c0c;line-height:16px">11</div>
  <div class="a" style="left:6px;top:498px;width:28px;height:1px;background:#b8b2b8"></div>
  <div class="t" style="left:6px;top:480px;width:28px;text-align:center;font-size:14px;color:#0c0c0c;line-height:16px">12</div>
  <div class="a" style="left:6px;top:520px;width:28px;height:1px;background:#b8b2b8"></div>
  <div class="t" style="left:6px;top:502px;width:28px;text-align:center;font-size:14px;color:#0c0c0c;line-height:16px">13</div>
  <div class="a" style="left:35px;top:278px;width:830px;height:1px;background:#dcdcdc"></div>
  <div class="a" style="left:35px;top:300px;width:830px;height:1px;background:#dcdcdc"></div>
  <div class="a" style="left:35px;top:322px;width:830px;height:1px;background:#dcdcdc"></div>
  <div class="a" style="left:35px;top:344px;width:830px;height:1px;background:#dcdcdc"></div>
  <div class="a" style="left:35px;top:366px;width:830px;height:1px;background:#dcdcdc"></div>
  <div class="a" style="left:35px;top:388px;width:830px;height:1px;background:#dcdcdc"></div>
  <div class="a" style="left:35px;top:410px;width:830px;height:1px;background:#dcdcdc"></div>
  <div class="a" style="left:35px;top:432px;width:830px;height:1px;background:#dcdcdc"></div>
  <div class="a" style="left:35px;top:454px;width:830px;height:1px;background:#dcdcdc"></div>
  <div class="a" style="left:35px;top:476px;width:830px;height:1px;background:#dcdcdc"></div>
  <div class="a" style="left:35px;top:498px;width:830px;height:1px;background:#dcdcdc"></div>
  <div class="a" style="left:35px;top:520px;width:830px;height:1px;background:#dcdcdc"></div>
  <div class="a" style="left:106px;top:235px;width:1px;height:280px;background:#dcdcdc"></div>
  <div class="a" style="left:178px;top:235px;width:1px;height:280px;background:#dcdcdc"></div>
  <div class="a" style="left:250px;top:235px;width:1px;height:280px;background:#dcdcdc"></div>
  <div class="a" style="left:322px;top:235px;width:1px;height:280px;background:#dcdcdc"></div>
  <div class="a" style="left:394px;top:235px;width:1px;height:280px;background:#dcdcdc"></div>
  <div class="a" style="left:466px;top:235px;width:1px;height:280px;background:#dcdcdc"></div>
  <div class="a" style="left:538px;top:235px;width:1px;height:280px;background:#dcdcdc"></div>
  <div class="a" style="left:610px;top:235px;width:1px;height:280px;background:#dcdcdc"></div>
  <div class="a" style="left:682px;top:235px;width:1px;height:280px;background:#dcdcdc"></div>
  <div class="a" style="left:754px;top:235px;width:1px;height:280px;background:#dcdcdc"></div>
  <div class="a" style="left:826px;top:235px;width:1px;height:280px;background:#dcdcdc"></div>
  <div class="a" style="left:35px;top:235px;width:576px;height:22px;background:#009a97"></div>
  <div class="t" style="left:37px;top:239px;font-size:12px;font-weight:bold;color:#fff">产品名称</div>
  <div class="t" style="left:109px;top:239px;font-size:12px;font-weight:bold;color:#fff">大类</div>
  <div class="t" style="left:181px;top:239px;font-size:12px;font-weight:bold;color:#fff">业务人员</div>
  <div class="t" style="left:253px;top:239px;font-size:12px;font-weight:bold;color:#fff">部门</div>
  <div class="t" style="left:323px;width:72px;text-align:center;top:239px;font-size:12px;font-weight:bold;color:#fff">销售数量</div>
  <div class="t" style="left:395px;width:72px;text-align:center;top:239px;font-size:12px;font-weight:bold;color:#fff">销售单价</div>
  <div class="t" style="left:467px;width:72px;text-align:center;top:239px;font-size:12px;font-weight:bold;color:#fff">销售金额</div>
  <div class="t" style="left:539px;width:72px;text-align:center;top:239px;font-size:12px;font-weight:bold;color:#fff">成本单价</div>
  <div class="t" style="left:37px;top:261px;font-size:12px;color:#0c0c0c;width:69px;overflow:hidden">柔巾机</div>
  <div class="t" style="left:109px;top:261px;font-size:12px;color:#0c0c0c;width:69px;overflow:hidden">电暖器</div>
  <div class="t" style="left:181px;top:261px;font-size:12px;color:#0c0c0c;width:69px;overflow:hidden">丁悦鸿</div>
  <div class="t" style="left:253px;top:261px;font-size:12px;color:#0c0c0c;width:69px;overflow:hidden">销售三部</div>
  <div class="t" style="left:323px;width:72px;text-align:center;top:261px;font-size:12px;color:#0c0c0c">48</div>
  <div class="t" style="left:395px;width:72px;text-align:center;top:261px;font-size:12px;color:#0c0c0c">110</div>
  <div class="t" style="left:467px;width:72px;text-align:center;top:261px;font-size:12px;color:#0c0c0c">5280</div>
  <div class="t" style="left:539px;width:72px;text-align:center;top:261px;font-size:12px;color:#0c0c0c">77</div>
  <div class="t" style="left:37px;top:283px;font-size:12px;color:#0c0c0c;width:69px;overflow:hidden">电热水瓶</div>
  <div class="t" style="left:109px;top:283px;font-size:12px;color:#0c0c0c;width:69px;overflow:hidden">厨房用品</div>
  <div class="t" style="left:181px;top:283px;font-size:12px;color:#0c0c0c;width:69px;overflow:hidden">周珧</div>
  <div class="t" style="left:253px;top:283px;font-size:12px;color:#0c0c0c;width:69px;overflow:hidden">销售一部</div>
  <div class="t" style="left:323px;width:72px;text-align:center;top:283px;font-size:12px;color:#0c0c0c">12</div>
  <div class="t" style="left:395px;width:72px;text-align:center;top:283px;font-size:12px;color:#0c0c0c">240</div>
  <div class="t" style="left:467px;width:72px;text-align:center;top:283px;font-size:12px;color:#0c0c0c">2880</div>
  <div class="t" style="left:539px;width:72px;text-align:center;top:283px;font-size:12px;color:#0c0c0c">187.2</div>
  <div class="t" style="left:37px;top:305px;font-size:12px;color:#0c0c0c;width:69px;overflow:hidden">直握式打蛋机</div>
  <div class="t" style="left:109px;top:305px;font-size:12px;color:#0c0c0c;width:69px;overflow:hidden">厨房用品</div>
  <div class="t" style="left:181px;top:305px;font-size:12px;color:#0c0c0c;width:69px;overflow:hidden">周曼运</div>
  <div class="t" style="left:253px;top:305px;font-size:12px;color:#0c0c0c;width:69px;overflow:hidden">销售二部</div>
  <div class="t" style="left:323px;width:72px;text-align:center;top:305px;font-size:12px;color:#0c0c0c">14</div>
  <div class="t" style="left:395px;width:72px;text-align:center;top:305px;font-size:12px;color:#0c0c0c">190</div>
  <div class="t" style="left:467px;width:72px;text-align:center;top:305px;font-size:12px;color:#0c0c0c">2660</div>
  <div class="t" style="left:539px;width:72px;text-align:center;top:305px;font-size:12px;color:#0c0c0c">140.6</div>
  <div class="t" style="left:37px;top:327px;font-size:12px;color:#0c0c0c;width:69px;overflow:hidden">三明治炉/华夫饼机</div>
  <div class="t" style="left:109px;top:327px;font-size:12px;color:#0c0c0c;width:69px;overflow:hidden">烹饪用品</div>
  <div class="t" style="left:181px;top:327px;font-size:12px;color:#0c0c0c;width:69px;overflow:hidden">周珧</div>
  <div class="t" style="left:253px;top:327px;font-size:12px;color:#0c0c0c;width:69px;overflow:hidden">销售一部</div>
  <div class="t" style="left:323px;width:72px;text-align:center;top:327px;font-size:12px;color:#0c0c0c">19</div>
  <div class="t" style="left:395px;width:72px;text-align:center;top:327px;font-size:12px;color:#0c0c0c">280</div>
  <div class="t" style="left:467px;width:72px;text-align:center;top:327px;font-size:12px;color:#0c0c0c">5320</div>
  <div class="t" style="left:539px;width:72px;text-align:center;top:327px;font-size:12px;color:#0c0c0c">224</div>
  <div class="t" style="left:37px;top:349px;font-size:12px;color:#0c0c0c;width:69px;overflow:hidden">旅行式熨斗</div>
  <div class="t" style="left:109px;top:349px;font-size:12px;color:#0c0c0c;width:69px;overflow:hidden">家居用品</div>
  <div class="t" style="left:181px;top:349px;font-size:12px;color:#0c0c0c;width:69px;overflow:hidden">周秋鸿</div>
  <div class="t" style="left:253px;top:349px;font-size:12px;color:#0c0c0c;width:69px;overflow:hidden">销售三部</div>
  <div class="t" style="left:323px;width:72px;text-align:center;top:349px;font-size:12px;color:#0c0c0c">47</div>
  <div class="t" style="left:395px;width:72px;text-align:center;top:349px;font-size:12px;color:#0c0c0c">50</div>
  <div class="t" style="left:467px;width:72px;text-align:center;top:349px;font-size:12px;color:#0c0c0c">2350</div>
  <div class="t" style="left:539px;width:72px;text-align:center;top:349px;font-size:12px;color:#0c0c0c">42.5</div>
  <div class="t" style="left:37px;top:371px;font-size:12px;color:#0c0c0c;width:69px;overflow:hidden">台式卤素电暖器</div>
  <div class="t" style="left:109px;top:371px;font-size:12px;color:#0c0c0c;width:69px;overflow:hidden">电暖器</div>
  <div class="t" style="left:181px;top:371px;font-size:12px;color:#0c0c0c;width:69px;overflow:hidden">丁悦鸿</div>
  <div class="t" style="left:253px;top:371px;font-size:12px;color:#0c0c0c;width:69px;overflow:hidden">销售三部</div>
  <div class="t" style="left:323px;width:72px;text-align:center;top:371px;font-size:12px;color:#0c0c0c">36</div>
  <div class="t" style="left:395px;width:72px;text-align:center;top:371px;font-size:12px;color:#0c0c0c">250</div>
  <div class="t" style="left:467px;width:72px;text-align:center;top:371px;font-size:12px;color:#0c0c0c">9000</div>
  <div class="t" style="left:539px;width:72px;text-align:center;top:371px;font-size:12px;color:#0c0c0c">197.5</div>
  <div class="t" style="left:37px;top:393px;font-size:12px;color:#0c0c0c;width:69px;overflow:hidden">美容用具</div>
  <div class="t" style="left:109px;top:393px;font-size:12px;color:#0c0c0c;width:69px;overflow:hidden">浴室用品</div>
  <div class="t" style="left:181px;top:393px;font-size:12px;color:#0c0c0c;width:69px;overflow:hidden">彭浩鸿</div>
  <div class="t" style="left:253px;top:393px;font-size:12px;color:#0c0c0c;width:69px;overflow:hidden">销售二部</div>
  <div class="t" style="left:323px;width:72px;text-align:center;top:393px;font-size:12px;color:#0c0c0c">42</div>
  <div class="t" style="left:395px;width:72px;text-align:center;top:393px;font-size:12px;color:#0c0c0c">150</div>
  <div class="t" style="left:467px;width:72px;text-align:center;top:393px;font-size:12px;color:#0c0c0c">6300</div>
  <div class="t" style="left:539px;width:72px;text-align:center;top:393px;font-size:12px;color:#0c0c0c">124.5</div>
  <div class="t" style="left:37px;top:415px;font-size:12px;color:#0c0c0c;width:69px;overflow:hidden">电水壶</div>
  <div class="t" style="left:109px;top:415px;font-size:12px;color:#0c0c0c;width:69px;overflow:hidden">厨房用品</div>
  <div class="t" style="left:181px;top:415px;font-size:12px;color:#0c0c0c;width:69px;overflow:hidden">赵香碧</div>
  <div class="t" style="left:253px;top:415px;font-size:12px;color:#0c0c0c;width:69px;overflow:hidden">销售一部</div>
  <div class="t" style="left:323px;width:72px;text-align:center;top:415px;font-size:12px;color:#0c0c0c">18</div>
  <div class="t" style="left:395px;width:72px;text-align:center;top:415px;font-size:12px;color:#0c0c0c">180</div>
  <div class="t" style="left:467px;width:72px;text-align:center;top:415px;font-size:12px;color:#0c0c0c">3240</div>
  <div class="t" style="left:539px;width:72px;text-align:center;top:415px;font-size:12px;color:#0c0c0c">126</div>
  <div class="t" style="left:37px;top:437px;font-size:12px;color:#0c0c0c;width:69px;overflow:hidden">台式卤素电暖器</div>
  <div class="t" style="left:109px;top:437px;font-size:12px;color:#0c0c0c;width:69px;overflow:hidden">电暖器</div>
  <div class="t" style="left:181px;top:437px;font-size:12px;color:#0c0c0c;width:69px;overflow:hidden">范浩鸿</div>
  <div class="t" style="left:253px;top:437px;font-size:12px;color:#0c0c0c;width:69px;overflow:hidden">销售二部</div>
  <div class="t" style="left:323px;width:72px;text-align:center;top:437px;font-size:12px;color:#0c0c0c">10</div>
  <div class="t" style="left:395px;width:72px;text-align:center;top:437px;font-size:12px;color:#0c0c0c">250</div>
  <div class="t" style="left:467px;width:72px;text-align:center;top:437px;font-size:12px;color:#0c0c0c">2500</div>
  <div class="t" style="left:539px;width:72px;text-align:center;top:437px;font-size:12px;color:#0c0c0c">197.5</div>
  <div class="t" style="left:37px;top:459px;font-size:12px;color:#0c0c0c;width:69px;overflow:hidden">干电式女用剃毛器</div>
  <div class="t" style="left:109px;top:459px;font-size:12px;color:#0c0c0c;width:69px;overflow:hidden">浴室用品</div>
  <div class="t" style="left:181px;top:459px;font-size:12px;color:#0c0c0c;width:69px;overflow:hidden">张辰悦</div>
  <div class="t" style="left:253px;top:459px;font-size:12px;color:#0c0c0c;width:69px;overflow:hidden">销售一部</div>
  <div class="t" style="left:323px;width:72px;text-align:center;top:459px;font-size:12px;color:#0c0c0c">13</div>
  <div class="t" style="left:395px;width:72px;text-align:center;top:459px;font-size:12px;color:#0c0c0c">110</div>
  <div class="t" style="left:467px;width:72px;text-align:center;top:459px;font-size:12px;color:#0c0c0c">1430</div>
  <div class="t" style="left:539px;width:72px;text-align:center;top:459px;font-size:12px;color:#0c0c0c">93.5</div>
  <div class="t" style="left:37px;top:481px;font-size:12px;color:#0c0c0c;width:69px;overflow:hidden">台式暖风机</div>
  <div class="t" style="left:109px;top:481px;font-size:12px;color:#0c0c0c;width:69px;overflow:hidden">电暖器</div>
  <div class="t" style="left:181px;top:481px;font-size:12px;color:#0c0c0c;width:69px;overflow:hidden">张辰悦</div>
  <div class="t" style="left:253px;top:481px;font-size:12px;color:#0c0c0c;width:69px;overflow:hidden">销售一部</div>
  <div class="t" style="left:323px;width:72px;text-align:center;top:481px;font-size:12px;color:#0c0c0c">24</div>
  <div class="t" style="left:395px;width:72px;text-align:center;top:481px;font-size:12px;color:#0c0c0c">100</div>
  <div class="t" style="left:467px;width:72px;text-align:center;top:481px;font-size:12px;color:#0c0c0c">2400</div>
  <div class="t" style="left:539px;width:72px;text-align:center;top:481px;font-size:12px;color:#0c0c0c">77</div>
  <div class="t" style="left:37px;top:503px;font-size:12px;color:#0c0c0c;width:69px;overflow:hidden">榨汁机</div>
  <div class="t" style="left:109px;top:503px;font-size:12px;color:#0c0c0c;width:69px;overflow:hidden">厨房用品</div>
  <div class="t" style="left:181px;top:503px;font-size:12px;color:#0c0c0c;width:69px;overflow:hidden">吴惠静</div>
  <div class="t" style="left:253px;top:503px;font-size:12px;color:#0c0c0c;width:69px;overflow:hidden">销售二部</div>
  <div class="t" style="left:323px;width:72px;text-align:center;top:503px;font-size:12px;color:#0c0c0c">28</div>
  <div class="t" style="left:395px;width:72px;text-align:center;top:503px;font-size:12px;color:#0c0c0c">120</div>
  <div class="t" style="left:467px;width:72px;text-align:center;top:503px;font-size:12px;color:#0c0c0c">3360</div>
  <div class="t" style="left:539px;width:72px;text-align:center;top:503px;font-size:12px;color:#0c0c0c">91.2</div>
  <!--GRID_END-->
  <!-- tab bar -->
  <div class="a" style="left:15px;top:512px;width:850px;height:32px;background:#eef2ef;border-top:1px solid #e0e0e0"></div>
  <svg style="left:33px;top:523px" width="9" height="10" viewBox="0 0 9 10"><path d="M7.5 0.8 L2.5 5 L7.5 9.2" fill="none" stroke="#a0a0a0" stroke-width="1.1"/></svg>
  <svg style="left:66px;top:523px" width="9" height="10" viewBox="0 0 9 10"><path d="M1.5 0.8 L6.5 5 L1.5 9.2" fill="none" stroke="#a0a0a0" stroke-width="1.1"/></svg>
  <div class="a" style="left:122px;top:511px;width:59px;height:30px;background:#fafafa;border:1px solid #d8d8d8;border-radius:6px"></div>
  <div class="t" style="left:129px;top:518px;font-size:14px;color:#262626">数据源</div>
  <div class="a" style="left:130px;top:535px;width:42px;height:2px;background:#107c41"></div>
  <div class="a" style="left:185px;top:519px;width:1px;height:17px;background:#c8c8c8"></div>
  <div class="t" style="left:197px;top:521px;font-size:14px;color:#262626">透视表</div>
  <div class="a" style="left:251px;top:519px;width:1px;height:17px;background:#c8c8c8"></div>
  <svg style="left:294px;top:522px" width="11" height="11" viewBox="0 0 11 11"><path d="M5.5 0.5 V10.5 M0.5 5.5 H10.5" stroke="#323232" stroke-width="1.1"/></svg>
  <div class="a" style="left:780px;top:523px;width:2px;height:2px;background:#9a9a9a"></div>
  <div class="a" style="left:780px;top:527px;width:2px;height:2px;background:#9a9a9a"></div>
  <div class="a" style="left:780px;top:531px;width:2px;height:2px;background:#9a9a9a"></div>
  <div class="a" style="left:799px;top:520px;width:80px;height:15px;background:#fafafa;border-radius:7px"></div>
  <svg style="left:802px;top:523px" width="7" height="9" viewBox="0 0 7 9"><path d="M6.5 0.5 V8.5 L0.5 4.5 Z" fill="#6a6a6a"/></svg>
  <div class="a" style="left:814px;top:523px;width:60px;height:9px;background:#6e6e6e;border-radius:4.5px"></div>
  <!-- status bar -->
  <div class="a" style="left:15px;top:544px;width:850px;height:22px;background:#f7f6f8;border-top:1px solid #c4c4c4"></div>
  <div class="t" style="left:13px;top:548px;font-size:12px;color:#1a1a1a;-webkit-text-stroke:0.25px #1a1a1a">就绪</div>
  <svg style="left:56px;top:548px" width="16" height="15" viewBox="0 0 16 15">
    <path d="M1.6 13 V1.6 H14.6 V4.5 M1.6 13 H5.5 M1.6 3.4 H14.6" fill="none" stroke="#1a1a1a" stroke-width="1.2"/>
    <path d="M3 5.8 H5.3 M3 7.9 H5.3 M3 10 H5.3" stroke="#1a1a1a" stroke-width="1"/>
    <circle cx="10.6" cy="9.2" r="3.9" fill="#f7f6f8" stroke="#1a1a1a" stroke-width="1.2"/>
    <circle cx="10.6" cy="9.2" r="1.7" fill="#1a1a1a"/>
  </svg>
  <svg style="left:88px;top:548px" width="16" height="15" viewBox="0 0 16 15">
    <circle cx="6.9" cy="2.2" r="1.7" fill="none" stroke="#1a1a1a" stroke-width="1.1"/>
    <path d="M1.4 3 C2.8 4.6 4 5.2 5.2 5.3 L3.6 12.2 C3.4 13.2 4.4 13.6 4.9 12.8 L6.9 9 M12.4 3 C11.2 4.5 10 5.2 8.6 5.3 L8.3 7.5" fill="none" stroke="#1a1a1a" stroke-width="1.1"/>
    <path d="M8.9 7.7 L14.5 13.4 M14.5 7.7 L8.9 13.4" stroke="#1a1a1a" stroke-width="1.1"/>
  </svg>
  <div class="t" style="left:107px;top:548px;font-size:12px;color:#1a1a1a;-webkit-text-stroke:0.25px #1a1a1a">辅助功能: 调查</div>
  <div class="a" style="left:15px;top:566px;width:850px;height:1px;background:#217346"></div><div class="a" style="left:15px;top:567px;width:850px;height:1px;background:#a8a8a8"></div>
</div>
</div>
</body></html>
